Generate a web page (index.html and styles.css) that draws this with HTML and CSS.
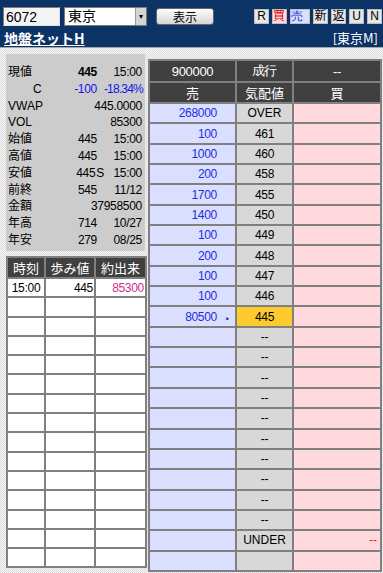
FILE: index.html
```html
<!DOCTYPE html>
<html lang="ja">
<head>
  <meta charset="UTF-8">
  <meta name="viewport" content="width=device-width, initial-scale=1.0">
  <title>板情報 6072</title>
  <link rel="stylesheet" href="styles.css">
</head>
<body>
  <!-- 銘柄入力と操作ボタン -->
  <div class="header">
    <div class="header-row">
      <input class="code-input" type="text" value="6072">
      <div class="market-select">
        <span class="market-value">東京</span>
        <span class="market-arrow">&#9662;</span>
      </div>
      <button class="show-btn">表示</button>
      <div class="mini-btns">
        <span class="mini">R</span>
        <span class="mini buy">買</span>
        <span class="mini sell">売</span>
        <span class="mini">新</span>
        <span class="mini">返</span>
        <span class="mini">U</span>
        <span class="mini">N</span>
      </div>
    </div>
    <div class="header-row name-row">
      <a class="stock-name" href="#">地盤ネットH</a>
      <span class="market-tag">[東京M]</span>
    </div>
  </div>

  <div class="main">
    <div class="left">
      <!-- 株価情報 -->
      <div class="info">
        <div class="info-row"><span>現値</span><span class="num bold">445</span><span class="num">15:00</span></div>
        <div class="info-row"><span class="indent">C</span><span class="num blue">-100</span><span class="num blue pct">-18.34%</span></div>
        <div class="info-row"><span>VWAP</span><span class="num wide">445.0000</span></div>
        <div class="info-row"><span>VOL</span><span class="num wide">85300</span></div>
        <div class="info-row"><span>始値</span><span class="num">445</span><span class="num">15:00</span></div>
        <div class="info-row"><span>高値</span><span class="num">445</span><span class="num">15:00</span></div>
        <div class="info-row"><span>安値</span><span class="num">445<span class="mark">S</span></span><span class="num">15:00</span></div>
        <div class="info-row"><span>前終</span><span class="num">545</span><span class="num">11/12</span></div>
        <div class="info-row"><span>金額</span><span class="num wide">37958500</span></div>
        <div class="info-row"><span>年高</span><span class="num">714</span><span class="num">10/27</span></div>
        <div class="info-row"><span>年安</span><span class="num">279</span><span class="num">08/25</span></div>
      </div>

      <!-- 歩み値 -->
      <table class="ticks">
        <colgroup><col class="c-time"><col class="c-price"><col class="c-vol"></colgroup>
        <tr class="head"><th>時刻</th><th>歩み値</th><th>約出来</th></tr>
        <tr><td class="center">15:00</td><td class="right">445</td><td class="right magenta">85300</td></tr>
        <tr><td></td><td></td><td></td></tr>
        <tr><td></td><td></td><td></td></tr>
        <tr><td></td><td></td><td></td></tr>
        <tr><td></td><td></td><td></td></tr>
        <tr><td></td><td></td><td></td></tr>
        <tr><td></td><td></td><td></td></tr>
        <tr><td></td><td></td><td></td></tr>
        <tr><td></td><td></td><td></td></tr>
        <tr><td></td><td></td><td></td></tr>
        <tr><td></td><td></td><td></td></tr>
        <tr><td></td><td></td><td></td></tr>
        <tr><td></td><td></td><td></td></tr>
        <tr><td></td><td></td><td></td></tr>
        <tr><td></td><td></td><td></td></tr>
      </table>
    </div>

    <!-- 板 -->
    <table class="book">
      <colgroup><col class="c-sell"><col class="c-mid"><col class="c-buy"></colgroup>
      <tr class="head h1"><th>900000</th><th>成行</th><th>--</th></tr>
      <tr class="head"><th>売</th><th>気配値</th><th>買</th></tr>
      <tr><td class="sell">268000</td><td class="price word">OVER</td><td class="buy"></td></tr>
      <tr><td class="sell">100</td><td class="price">461</td><td class="buy"></td></tr>
      <tr><td class="sell">1000</td><td class="price">460</td><td class="buy"></td></tr>
      <tr><td class="sell">200</td><td class="price">458</td><td class="buy"></td></tr>
      <tr><td class="sell">1700</td><td class="price">455</td><td class="buy"></td></tr>
      <tr><td class="sell">1400</td><td class="price">450</td><td class="buy"></td></tr>
      <tr><td class="sell">100</td><td class="price">449</td><td class="buy"></td></tr>
      <tr><td class="sell">200</td><td class="price">448</td><td class="buy"></td></tr>
      <tr><td class="sell">100</td><td class="price">447</td><td class="buy"></td></tr>
      <tr><td class="sell">100</td><td class="price">446</td><td class="buy"></td></tr>
      <tr><td class="sell">80500<span class="dot">・</span></td><td class="price current">445</td><td class="buy"></td></tr>
      <tr><td class="sell"></td><td class="price">--</td><td class="buy"></td></tr>
      <tr><td class="sell"></td><td class="price">--</td><td class="buy"></td></tr>
      <tr><td class="sell"></td><td class="price">--</td><td class="buy"></td></tr>
      <tr><td class="sell"></td><td class="price">--</td><td class="buy"></td></tr>
      <tr><td class="sell"></td><td class="price">--</td><td class="buy"></td></tr>
      <tr><td class="sell"></td><td class="price">--</td><td class="buy"></td></tr>
      <tr><td class="sell"></td><td class="price">--</td><td class="buy"></td></tr>
      <tr><td class="sell"></td><td class="price">--</td><td class="buy"></td></tr>
      <tr><td class="sell"></td><td class="price">--</td><td class="buy"></td></tr>
      <tr><td class="sell"></td><td class="price">--</td><td class="buy"></td></tr>
      <tr><td class="sell"></td><td class="price word">UNDER</td><td class="buy red">--</td></tr>
      <tr><td class="sell"></td><td class="price"></td><td class="buy"></td></tr>
    </table>
  </div>
</body>
</html>
```

FILE: styles.css
```css
/* Base */
body {
  margin: 0;
  width: 383px;
  height: 573px;
  overflow: hidden;
  font-family: "Liberation Sans", "Noto Sans CJK JP", sans-serif;
  font-size: 12px;
  color: #000;
  background: repeating-conic-gradient(#f6f6f6 0 25%, #dcdcdc 0 50%) 0 0 / 2px 2px;
}

/* Header */
.header {
  background-color: #0b3366;
  height: 48px;
  border-bottom: 1px solid #a8a8a8;
  padding: 0 3px;
  box-sizing: border-box;
}
.header-row {
  display: flex;
  align-items: center;
}
.header-row:first-child {
  padding-top: 7px;
  height: 19px;
}
.code-input {
  width: 57px;
  height: 19px;
  box-sizing: border-box;
  margin: 0;
  padding: 0 2px;
  border: 1px solid #7a7a7a;
  border-right-color: #e0e0e0;
  border-bottom-color: #e0e0e0;
  font-family: "Liberation Sans", sans-serif;
  font-size: 14px;
  background: #f4f4f4;
}
.market-select {
  display: flex;
  margin-left: 4px;
  width: 83px;
  height: 19px;
  box-sizing: border-box;
  border: 1px solid #7a7a7a;
  background: #fff;
}
.market-value {
  flex: 1;
  padding-left: 3px;
  font-size: 14px;
  line-height: 17px;
}
.market-arrow {
  width: 10px;
  background: #d4d4d4;
  border-left: 1px solid #999;
  font-size: 8px;
  line-height: 17px;
  text-align: center;
}
.show-btn {
  margin-left: 9px;
  width: 58px;
  height: 17px;
  padding: 0;
  border: 1px solid #666;
  border-radius: 3px;
  background: linear-gradient(#fdfdfd, #d6d6d6);
  font-family: "Noto Sans CJK JP", sans-serif;
  font-size: 12px;
  line-height: 15px;
}
.mini-btns {
  display: flex;
  gap: 3px;
  margin-left: auto;
  margin-right: -2px;
}
.mini {
  width: 15px;
  height: 15px;
  background: #e6e6e6;
  border: 1px solid #bdbdbd;
  box-sizing: border-box;
  font-size: 12px;
  line-height: 13px;
  text-align: center;
}
.mini.buy { color: #e00000; }
.mini.sell { color: #1a2ad0; }

.name-row {
  justify-content: space-between;
  margin-top: 4px;
}
.stock-name {
  color: #fff;
  font-family: "Noto Sans CJK JP", sans-serif;
  font-weight: bold;
  font-size: 14px;
  line-height: 16px;
  margin-left: 1px;
}
.market-tag {
  color: #fff;
  font-family: "Noto Sans CJK JP", sans-serif;
  font-size: 13px;
  line-height: 16px;
  margin-right: 2px;
}

/* Layout */
.main {
  display: flex;
  padding: 6px 0 0 6px;
  gap: 3px;
}
.left {
  width: 139px;
}

/* Price info */
.info {
  background-color: #cccccc;
  height: 197px;
  padding: 10px 3px 0 2px;
  box-sizing: border-box;
}
.info-row {
  display: grid;
  grid-template-columns: 40px 49px 45px;
  height: 16.8px;
  line-height: 16.8px;
  font-family: "Noto Sans CJK JP", sans-serif;
}
.info-row > span:first-child {
  font-family: "Liberation Sans", "Noto Sans CJK JP", sans-serif;
}
.num,
.ticks td,
.sell,
.price,
.book .h1 th {
  font-family: "Liberation Sans", sans-serif;
  font-size: 12px;
  letter-spacing: -0.3px;
}
.info-row .num {
  text-align: right;
}
.info-row .wide {
  grid-column: 2 / 4;
}
.info-row .pct {
  letter-spacing: -0.8px;
  margin-right: -1px;
}
.indent {
  padding-left: 25px;
}
.bold { font-weight: bold; }
.blue { color: #1414e6; }
.mark {
  margin-right: -7px;
  padding-left: 1px;
}

/* Tables */
table {
  border-collapse: collapse;
  table-layout: fixed;
}
th, td {
  border: 2px solid #808080;
  padding: 0;
  white-space: nowrap;
  overflow: visible;
}
.head th {
  background-color: #404040;
  color: #fff;
  font-weight: normal;
  font-family: "Noto Sans CJK JP", sans-serif;
}

/* Ticks */
.ticks {
  margin-top: 5px;
  width: 139px;
  background: #fff;
}
.c-time { width: 38px; }
.c-price { width: 50px; }
.c-vol { width: 51px; }
.ticks .head th {
  height: 19px;
  font-size: 13px;
}
.ticks td {
  height: 17.3px;
}
.center { text-align: center; }
.right { text-align: right; padding-right: 1px; }
.magenta { color: #cc2e8c; }

/* Order book */
.book {
  width: 232px;
  margin-top: 5px;
}
.c-sell { width: 87px; }
.c-mid { width: 57px; }
.c-buy { width: 88px; }
.book .head th {
  height: 18px;
  font-size: 13px;
}
.book .head.h1 th {
  height: 20px;
}
.book td {
  height: 18.35px;
}
.sell {
  background-color: #dadfff;
  color: #1f2ee0;
  text-align: right;
  padding-right: 18px;
  position: relative;
}
.dot {
  position: absolute;
  right: 2px;
  font-family: "Noto Sans CJK JP", sans-serif;
  font-size: 12px;
}
.price {
  background-color: #d8d8d8;
  text-align: center;
}
.price.word {
  letter-spacing: 0;
}
.price.current {
  background-color: #fecb2e;
}
.buy {
  background-color: #ffd9de;
  text-align: right;
  padding-right: 3px;
}
.red { color: #ff1a1a; }
```
